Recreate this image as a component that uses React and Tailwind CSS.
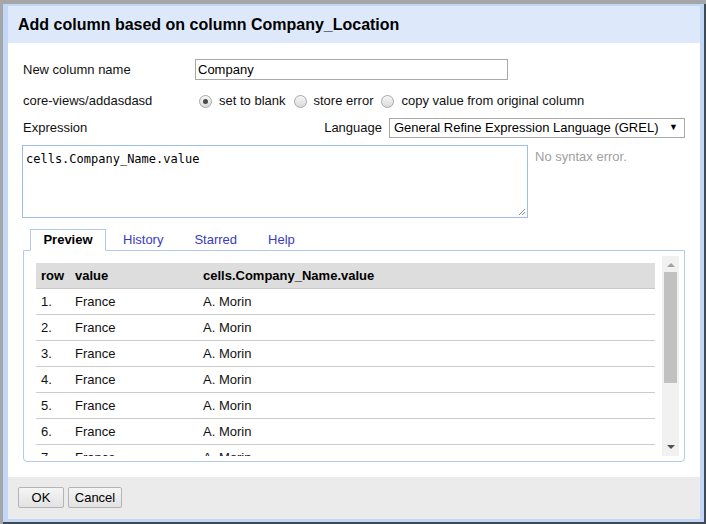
import React from 'react'

const rows = [1, 2, 3, 4, 5, 6, 7]
const tabs = ['History', 'Starred', 'Help']

function Radio({ checked }) {
  return (
    <span className="flex h-[13px] w-[13px] shrink-0 items-center justify-center rounded-full border border-[#a8a8a8] bg-gradient-to-b from-[#f6f6f6] to-[#dadada]">
      {checked && <span className="h-[5px] w-[5px] rounded-full bg-[#4a4a4a]" />}
    </span>
  )
}

function Option({ label, checked }) {
  return (
    <label className="mr-[8px] flex items-center">
      <Radio checked={checked} />
      <span className="ml-[7px]">{label}</span>
    </label>
  )
}

export default function App() {
  return (
    <div className="h-[524px] w-[706px] overflow-hidden bg-[#a4a6a8] pl-[3px] pt-[4px] font-['Liberation_Sans',Arial,sans-serif] text-[13px] text-[#111]">
      <div className="h-[520px] w-[703px] border-b-[2px] border-r-[2px] border-[#3f4a55]">
        <div className="flex h-[518px] flex-col border-b-[3px] border-l-[5px] border-r-[4px] border-t-[2px] border-[#c2d6f6]">
          {/* Title bar */}
          <div className="flex h-[37px] shrink-0 items-center bg-[#dde9fb] px-[10px]">
            <h1 className="text-[16px] font-bold text-black">Add column based on column Company_Location</h1>
          </div>

          {/* Body */}
          <div className="h-[434px] shrink-0 bg-white px-[15px] pt-[16px]">
            <div className="flex h-[21px] items-center">
              <span className="w-[172px]">New column name</span>
              <div className="flex h-[21px] w-[313px] items-center border border-[#a9a9a9] pl-[2px] text-black">Company</div>
            </div>

            <div className="mt-[11px] flex h-[20px] items-center">
              <span className="w-[176px]">core-views/addasdasd</span>
              <Option label="set to blank" checked />
              <Option label="store error" />
              <Option label="copy value from original column" />
            </div>

            <div className="mt-[7px] flex h-[20px] items-center">
              <span className="flex-1">Expression</span>
              <span className="mr-[7px]">Language</span>
              <div className="flex h-[20px] w-[296px] items-center justify-between border border-[#a9a9a9] pl-[4px] pr-[6px] text-black">
                <span>General Refine Expression Language (GREL)</span>
                <span className="text-[9px]">▼</span>
              </div>
            </div>

            <div className="mt-[7px] flex items-start">
              <div className="relative ml-[-1px] h-[73px] w-[506px] border border-[#9dbcf0] px-[3px] pt-[4px] font-['DejaVu_Sans_Mono',monospace] text-[12px] text-black">
                cells.Company_Name.value
                <svg className="absolute bottom-[1px] right-[1px]" width="8" height="8" viewBox="0 0 8 8">
                  <path d="M7 1 L1 7 M7 4 L4 7" stroke="#8a8a8a" strokeWidth="1" />
                </svg>
              </div>
              <span className="ml-[7px] mt-[2px] text-[#a0a0a0]">No syntax error.</span>
            </div>

            {/* Tabs */}
            <div className="mt-[11px] flex pl-[7px]">
              <div className="relative z-10 mb-[-1px] flex h-[22px] w-[76px] items-center justify-center border border-b-white border-[#b3c9f0] bg-white font-bold text-black">
                Preview
              </div>
              {tabs.map((t) => (
                <div key={t} className="ml-[3px] flex h-[21px] items-center px-[14px] text-[#3a3ac4]">
                  {t}
                </div>
              ))}
            </div>

            <div className="h-[212px] rounded-b-[4px] border border-[#b3c9f0] p-[5px]">
              <div className="flex h-[200px]">
                <div className="flex-1 overflow-hidden pl-[7px] pt-[7px]">
                  <div className="w-[619px]">
                    <div className="flex h-[26px] items-center border-b border-[#c8c8c8] bg-[#dddddd] font-bold text-black">
                      <span className="w-[34px] pl-[5px]">row</span>
                      <span className="w-[128px] pl-[5px]">value</span>
                      <span className="pl-[5px]">cells.Company_Name.value</span>
                    </div>
                    {rows.map((n) => (
                      <div key={n} className="flex h-[26px] items-center border-b border-[#cccccc]">
                        <span className="w-[34px] pl-[5px]">{n}.</span>
                        <span className="w-[128px] pl-[5px]">France</span>
                        <span className="pl-[5px]">A. Morin</span>
                      </div>
                    ))}
                  </div>
                </div>
                <div className="flex w-[17px] flex-col items-center bg-[#f1f1f1]">
                  <span className="mt-[7px] h-0 w-0 border-x-[4px] border-b-[4px] border-x-transparent border-b-[#a3a3a3]" />
                  <span className="mt-[5px] h-[111px] w-[13px] bg-[#c1c1c1]" />
                  <span className="mt-auto mb-[7px] h-0 w-0 border-x-[4px] border-t-[4px] border-x-transparent border-t-[#505050]" />
                </div>
              </div>
            </div>
          </div>

          {/* Footer */}
          <div className="flex flex-1 items-start gap-[4px] bg-[#ebebeb] pl-[10px] pt-[10px]">
            <button className="h-[21px] w-[46px] rounded-[2px] border border-[#b5b5b5] bg-gradient-to-b from-[#f5f5f5] to-[#e2e2e2] text-[13px] text-black">
              OK
            </button>
            <button className="h-[21px] w-[54px] rounded-[2px] border border-[#b5b5b5] bg-gradient-to-b from-[#f5f5f5] to-[#e2e2e2] text-[13px] text-black">
              Cancel
            </button>
          </div>
        </div>
      </div>
    </div>
  )
}
